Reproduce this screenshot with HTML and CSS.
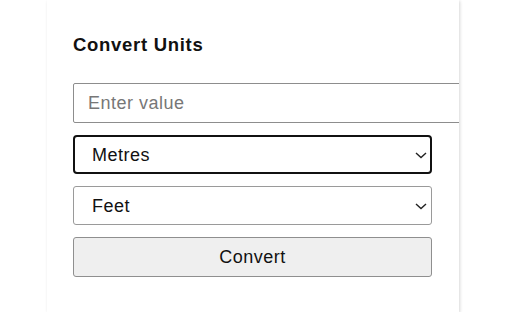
FILE: index.html
```html
<!DOCTYPE html>
<html>
<head>
<meta charset="utf-8">
<link rel="stylesheet" href="styles.css">
</head>
<body>
<div class="panel">
  <h2 class="title">Convert Units</h2>
  <div class="form">
    <input class="field" type="text" placeholder="Enter value">
    <div class="select-wrap">
      <select class="select focused"><option>Metres</option></select>
      <svg class="chev" width="12" height="7" viewBox="0 0 12 7"><path d="M1 1 L6 5.5 L11 1" fill="none" stroke="#222" stroke-width="1.4"/></svg>
    </div>
    <div class="select-wrap">
      <select class="select"><option>Feet</option></select>
      <svg class="chev" width="12" height="7" viewBox="0 0 12 7"><path d="M1 1 L6 5.5 L11 1" fill="none" stroke="#222" stroke-width="1.4"/></svg>
    </div>
    <button class="btn">Convert</button>
  </div>
</div>
</body>
</html>
```
FILE: styles.css
```css
html, body {
  margin: 0;
  padding: 0;
  background: #fff;
}
body {
  font-family: "Liberation Sans", Arial, sans-serif;
  color: #111;
}
.panel {
  margin-left: 47px;
  width: 412px;
  height: 312px;
  box-sizing: border-box;
  padding: 34px 0 0 26px;
  background: #fff;
  box-shadow: 1px 1px 3px rgba(0,0,0,0.16);
  overflow: hidden;
}
.title {
  margin: 0;
  font-size: 18.5px;
  line-height: 22px;
  font-weight: bold;
  letter-spacing: 0.7px;
}
.form {
  margin-top: 27px;
  display: flex;
  flex-direction: column;
  gap: 12px;
  width: 359px;
}
.field {
  box-sizing: border-box;
  width: 420px;
  height: 40px;
  border: 1px solid #8d8d8d;
  border-radius: 2px;
  padding: 0 0 0 14px;
  font-family: inherit;
  font-size: 18px;
  letter-spacing: 0.5px;
  color: #111;
  outline: none;
}
.field::placeholder {
  color: #777;
}
.select-wrap {
  position: relative;
}
.select {
  appearance: none;
  -webkit-appearance: none;
  box-sizing: border-box;
  width: 100%;
  height: 39px;
  border: 1px solid #9a9a9a;
  border-radius: 3px;
  background: #fff;
  padding: 0 0 0 18px;
  font-family: inherit;
  font-size: 18px;
  letter-spacing: 0.5px;
  color: #111;
  outline: none;
}
.select.focused {
  border: 2px solid #111;
  border-radius: 4px;
  padding-left: 17px;
}
.chev {
  position: absolute;
  right: 5px;
  top: 17px;
}
.btn {
  box-sizing: border-box;
  width: 100%;
  height: 40px;
  border: 1px solid #8f8f8f;
  border-radius: 3px;
  background: #efefef;
  font-family: inherit;
  font-size: 18px;
  letter-spacing: 0.5px;
  color: #111;
}
```
